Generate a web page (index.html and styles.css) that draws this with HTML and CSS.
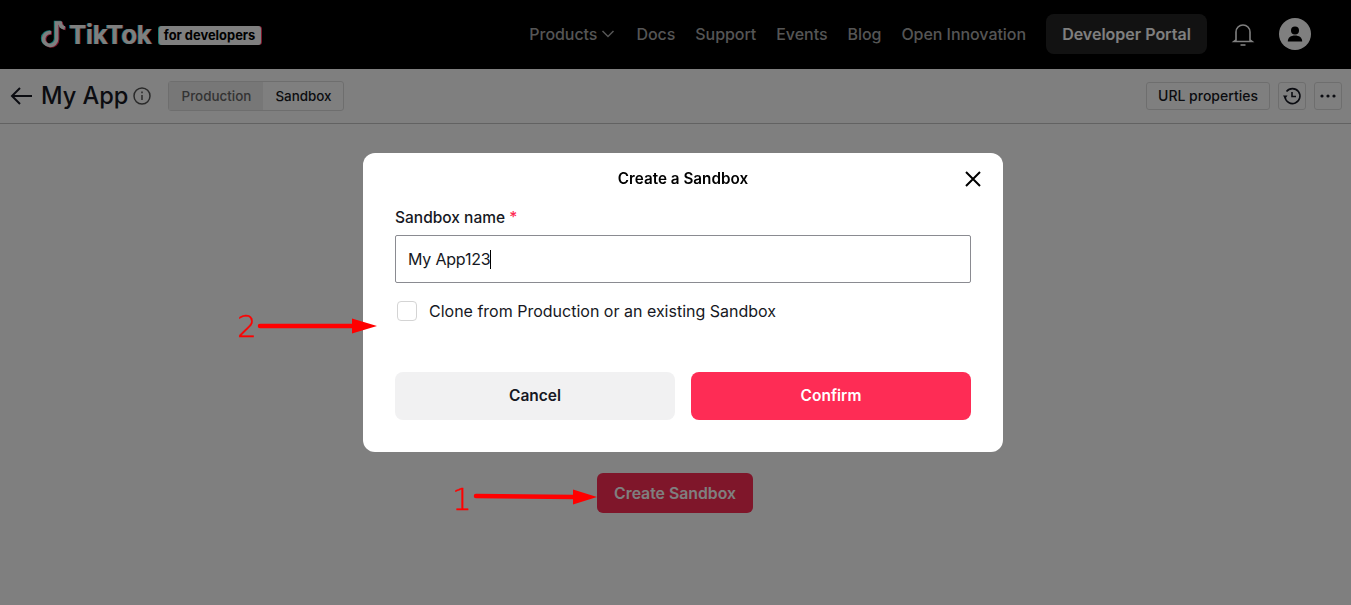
FILE: index.html
```html
<!DOCTYPE html>
<html lang="en">
<head>
<meta charset="utf-8">
<title>Create a Sandbox</title>
<link rel="stylesheet" href="styles.css">
</head>
<body>
<header class="topbar">
  <a class="brand">
    <svg class="brand-note" viewBox="0 0 26 28" width="26" height="28"><path class="n-cyan" d="M10 12a6.500 6.500 0 1 0 5.600 6.500V2.500h3.600c.3 2.800 2 4.600 4.600 5"/><path class="n-red" d="M12 13a6.500 6.500 0 1 0 5.600 6.500V3.500h3.600c.3 2.800 2 4.600 4.600 5"/><path class="n-white" d="M11 12.500a6.500 6.500 0 1 0 5.600 6.500V3h3.600c.3 2.800 2 4.600 4.600 5"/></svg>
    <span class="brand-name">TikTok</span>
    <span class="brand-tag">for developers</span>
  </a>
  <nav class="nav">
    <a class="nav-link nav-products">Products
      <svg class="chev" viewBox="0 0 14 8" width="14" height="8"><path d="M1.500 1l5.500 5.500L12.500 1"/></svg>
    </a>
    <a class="nav-link">Docs</a>
    <a class="nav-link">Support</a>
    <a class="nav-link">Events</a>
    <a class="nav-link">Blog</a>
    <a class="nav-link">Open Innovation</a>
  </nav>
  <a class="portal">Developer Portal</a>
  <svg class="bell" viewBox="0 0 24 26" width="24" height="26"><path d="M5 19V11a7 7 0 0 1 14 0v8l2 1.500H3z"/><path d="M9.500 24h5"/></svg>
  <span class="avatar"><svg viewBox="0 0 32 32" width="32" height="32"><circle cx="16" cy="12.500" r="4"/><path d="M8.800 23.500c0-4 3-6 7.200-6s7.200 2 7.200 6z"/></svg></span>
</header>
<section class="subbar">
  <svg class="back" viewBox="0 0 24 20" width="24" height="20"><path d="M23 10H3M11 2l-8 8 8 8"/></svg>
  <h1 class="app-name">My App</h1>
  <svg class="info" viewBox="0 0 18 18" width="18" height="18"><circle cx="9" cy="9" r="8"/><path d="M9 8v5M9 4.600v1.600"/></svg>
  <div class="segment">
    <span class="seg seg-off">Production</span>
    <span class="seg seg-on">Sandbox</span>
  </div>
  <div class="sub-actions">
    <button class="tool tool-text">URL properties</button>
    <button class="tool tool-icon"><svg viewBox="0 0 20 20" width="20" height="20"><path d="M3 11a7.500 7.500 0 1 0 1.500-5.500M10 6v4.500h4"/><path class="fill" d="M1 9.500h4.500L3.200 13z"/></svg></button>
    <button class="tool tool-icon"><svg viewBox="0 0 20 20" width="20" height="20"><circle class="fill" cx="4" cy="10" r="1.600"/><circle class="fill" cx="10" cy="10" r="1.600"/><circle class="fill" cx="16" cy="10" r="1.600"/></svg></button>
  </div>
</section>
<main class="content">
  <button class="create">Create Sandbox</button>
</main>

<div class="overlay"></div>
<div class="modal">
  <div class="modal-head">
    <h2 class="modal-title">Create a Sandbox</h2>
    <svg class="close" viewBox="0 0 16 16" width="16" height="16"><path d="M1 1l14 14M15 1L1 15"/></svg>
  </div>
  <label class="field-label">Sandbox name <span class="req">*</span></label>
  <div class="input">My App123<span class="caret"></span></div>
  <div class="check-row">
    <span class="checkbox"></span>
    <span class="check-label">Clone from Production or an existing Sandbox</span>
  </div>
  <div class="modal-actions">
    <button class="btn btn-cancel">Cancel</button>
    <button class="btn btn-confirm">Confirm</button>
  </div>
</div>

<span class="mark mark-2">2</span>
<svg class="arrow arrow-2" viewBox="0 0 122 16" width="122" height="16"><path class="shaft" d="M3 8h94"/><path class="head" d="M95 .5L120 8l-25 7.500z"/></svg>
<span class="mark mark-1">1</span>
<svg class="arrow arrow-1" viewBox="0 0 124 16" width="124" height="16"><path class="shaft" d="M3 7l98 1"/><path class="head" d="M100 .5L124 8l-24 7.500z"/></svg>
</body>
</html>
```
FILE: styles.css
```css
* { box-sizing: border-box; }
html, body { height: 100%; }
body {
  margin: 0;
  height: 605px;
  overflow: hidden;
  background: #fff;
  color: #161823;
  font-family: Inter, "Liberation Sans", sans-serif;
}
button { font-family: inherit; }

.topbar {
  display: flex;
  align-items: center;
  height: 69px;
  padding: 0 40px 1px;
  background: #000;
  color: #fff;
}
.brand { display: flex; align-items: center; }
.brand-note { fill: none; stroke-width: 3.600; }
.n-cyan { stroke: #25f4ee; }
.n-red { stroke: #fe2c55; }
.n-white { stroke: #fff; }
.brand-name {
  margin-left: 3px;
  font-size: 26px;
  font-weight: 700;
  letter-spacing: -0.3px;
  text-shadow: -0.5px 0 #25f4ee, 0.5px 0 #fe2c55;
}
.brand-tag {
  display: block;
  margin: 3px 0 0 7px;
  width: 102px;
  height: 19px;
  border-radius: 3px;
  background: #fff;
  color: #000;
  font-size: 12.900px;
  font-weight: 700;
  line-height: 19px;
  text-align: center;
  box-shadow: -1px 0 #25f4ee, 1px 0 #fe2c55;
}
.nav { display: flex; align-items: center; gap: 20px; margin-left: auto; }
.nav-link { color: #aaa; font-size: 16px; font-weight: 500; letter-spacing: -0.05px; }
.nav-products { display: flex; align-items: center; gap: 4px; margin-right: 1px; }
.chev { fill: none; stroke: #aaa; stroke-width: 1.500; }
.portal {
  display: block;
  margin-left: 20px;
  width: 161px;
  height: 40px;
  border-radius: 8px;
  background: #252525;
  color: #fff;
  font-size: 16px;
  font-weight: 600;
  line-height: 40px;
  text-align: center;
}
.bell { margin-left: 24px; fill: none; stroke: #fff; stroke-width: 1.600; }
.avatar {
  display: block;
  margin-left: 24px;
  width: 32px;
  height: 32px;
  border-radius: 50%;
  background: #fff;
}
.avatar svg { display: block; fill: #000; }

.subbar {
  display: flex;
  align-items: center;
  height: 55px;
  padding: 0 9px;
  border-bottom: 1px solid #c4c4c4;
}
.back { fill: none; stroke: #161823; stroke-width: 2; }
.app-name {
  margin: 0 0 0 8px;
  font-size: 23.600px;
  font-weight: 500;
  line-height: 32px;
}
.info { margin-left: 5px; fill: none; stroke: #555; stroke-width: 1.500; }
.segment {
  display: flex;
  margin-left: 17px;
  height: 30px;
  border: 1px solid #ddd;
  border-radius: 3px;
  font-size: 13.400px;
  font-weight: 500;
  line-height: 28px;
}
.seg { display: block; text-align: center; }
.seg-off { width: 94px; background: #eee; color: #666; }
.seg-on { width: 80px; color: #161823; }
.sub-actions { display: flex; align-items: center; gap: 8px; margin-left: auto; }
.tool {
  display: flex;
  align-items: center;
  justify-content: center;
  height: 28px;
  padding: 0;
  border: 1px solid #ddd;
  border-radius: 3px;
  background: #fff;
  color: #161823;
}
.tool-text { width: 124px; padding-bottom: 1px; font-size: 14px; font-weight: 500; }
.tool-icon { width: 28px; }
.tool-icon svg { fill: none; stroke: #161823; stroke-width: 1.600; }
.tool-icon .fill { fill: #161823; stroke: none; }

.content { display: flex; justify-content: center; padding: 349px 1px 0 0; }
.create {
  width: 156px;
  height: 40px;
  padding: 0;
  border: 0;
  border-radius: 6px;
  background: #fe2c55;
  color: #fff;
  font-size: 15.800px;
  font-weight: 600;
}

.overlay {
  position: fixed;
  inset: 0;
  background: rgba(0, 0, 0, 0.5);
}
.modal {
  position: absolute;
  left: 363px;
  top: 153px;
  width: 640px;
  height: 299px;
  padding: 0 32px;
  border-radius: 12px;
  background: #fff;
}
.modal-head {
  position: relative;
  height: 52px;
  padding-top: 16px;
}
.modal-title {
  margin: 0;
  color: #000;
  font-size: 15.250px;
  font-weight: 600;
  line-height: 20px;
  text-align: center;
}
.close {
  position: absolute;
  right: -10px;
  top: 18px;
  fill: none;
  stroke: #000;
  stroke-width: 2;
}
.field-label {
  display: block;
  height: 30px;
  color: #161823;
  font-size: 15.500px;
  font-weight: 500;
  line-height: 26px;
}
.req { color: #fe2c55; }
.input {
  display: flex;
  align-items: center;
  height: 48px;
  padding: 0 12px;
  border: 1px solid #8a8b91;
  border-radius: 2px;
  color: #161823;
  font-size: 16px;
  letter-spacing: -0.2px;
}
.caret {
  display: block;
  width: 1px;
  height: 19px;
  background: #000;
}
.check-row {
  display: flex;
  align-items: center;
  gap: 12px;
  margin-top: 18px;
  padding-left: 2px;
}
.checkbox {
  display: block;
  width: 20px;
  height: 20px;
  border: 1px solid #d4d4d4;
  border-radius: 4px;
}
.check-label { color: #161823; font-size: 16px; line-height: 20px; }
.modal-actions { display: flex; gap: 16px; margin-top: 51px; }
.btn {
  flex: 1;
  height: 48px;
  padding: 0 0 2px;
  border: 0;
  border-radius: 8px;
  font-size: 15.500px;
  font-weight: 600;
}
.btn-cancel { background: #f1f1f2; color: #161823; }
.btn-confirm { background: #fe2c55; color: #fff; }

.mark {
  position: absolute;
  color: #f00;
  font-family: "DejaVu Sans", sans-serif;
  font-size: 31px;
  font-weight: 200;
  line-height: 34px;
  -webkit-text-stroke: 0.4px #f00;
}
.mark-2 { left: 237px; top: 309px; }
.mark-1 { left: 452px; top: 482px; }
.arrow { position: absolute; }
.arrow-2 { left: 257px; top: 318px; }
.arrow-1 { left: 473px; top: 489px; }
.shaft { fill: none; stroke: #f00; stroke-width: 4.500; stroke-linecap: round; }
.head { fill: #f00; }
```
